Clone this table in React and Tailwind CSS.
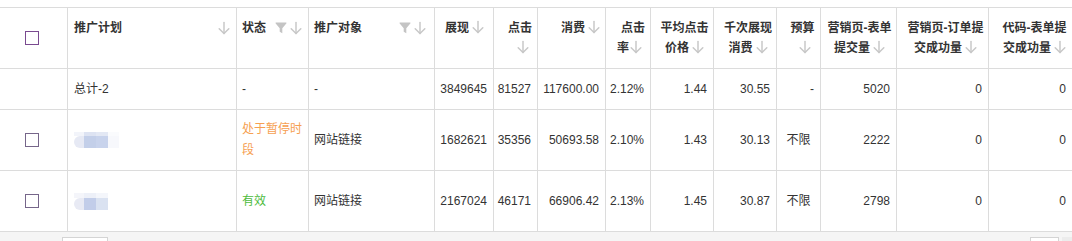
import React from "react";

const COLS =
  "grid grid-cols-[68px_169px_72px_126px_59px_44px_68px_45px_63px_63px_44px_76px_92px_83px] shrink-0";

function Arrow({ className = "" }) {
  return (
    <svg
      width="12"
      height="14"
      viewBox="0 0 12 14"
      className={"inline-block align-[-2px] " + className}
      fill="none"
      stroke="#c8c8c8"
      strokeWidth="1.5"
      strokeLinecap="round"
      strokeLinejoin="round"
    >
      <path d="M6 1.5V12.5" />
      <path d="M1.2 7.8L6 12.5L10.8 7.8" />
    </svg>
  );
}

function Filter() {
  return (
    <svg width="12" height="12" viewBox="0 0 12 12" className="inline-block align-[-1px]">
      <path
        d="M0.5 1.2C0.5 0.6 1 0.5 1.5 0.5H10.5C11 0.5 11.5 0.6 11.5 1.2L7.3 6.2V11.2L4.7 9.8V6.2Z"
        fill="#c4c4c4"
      />
    </svg>
  );
}

function Checkbox({ tone = "row" }) {
  return (
    <div
      className={
        "w-[14px] h-[14px] bg-white border " +
        (tone === "head" ? "border-[#7a4a90]" : "border-[#76668a]")
      }
    />
  );
}

function Blur({ variant }) {
  if (variant === 1) {
    return (
      <div className="flex flex-col blur-[0.6px]">
        <div className="flex h-[4px]">
          <div className="w-[10px] bg-[#f2f4fa]" />
          <div className="w-[12px] bg-[#dde3f2]" />
          <div className="w-[12px] bg-[#e3e8f4]" />
          <div className="w-[11px] bg-[#fafbfd]" />
        </div>
        <div className="flex h-[12px]">
          <div className="w-[10px] bg-[#e6e9f4] rounded-l-[6px]" />
          <div className="w-[12px] bg-[#c3cfe9]" />
          <div className="w-[12px] bg-[#c8d3ec]" />
          <div className="w-[11px] bg-[#f7f8fc]" />
        </div>
      </div>
    );
  }
  return (
    <div className="flex flex-col blur-[0.6px]">
      <div className="flex h-[5px]">
        <div className="w-[10px] bg-[#f4f5fa]" />
        <div className="w-[12px] bg-[#edf0f8]" />
        <div className="w-[12px] bg-[#f4f6fb]" />
      </div>
      <div className="flex h-[12px]">
        <div className="w-[10px] bg-[#e8eaf4] rounded-l-[6px]" />
        <div className="w-[12px] bg-[#c2cde9]" />
        <div className="w-[12px] bg-[#dae2f1]" />
      </div>
    </div>
  );
}

const cell = "border-r border-[#dcdcdc] px-[6px]";
const hcell = cell + " pt-[10px] leading-[20px]";

function HeaderRow() {
  return (
    <div className={COLS + " h-[62px] border-t border-b border-[#dcdcdc] font-bold text-[12px] text-[#333]"}>
      <div className={cell + " flex items-center justify-center pr-[10px]"}>
        <Checkbox tone="head" />
      </div>
      <div className={hcell + " flex justify-between items-start"}>
        <span>推广计划</span>
        <Arrow className="mt-[3px]" />
      </div>
      <div className={hcell + " flex justify-between items-start pl-[5px]"}>
        <span>状态</span>
        <span className="flex items-center gap-[3px] mt-[3px]">
          <Filter />
          <Arrow />
        </span>
      </div>
      <div className={hcell + " flex justify-between items-start pl-[5px] pr-[8px]"}>
        <span>推广对象</span>
        <span className="flex items-center gap-[3px] mt-[3px]">
          <Filter />
          <Arrow />
        </span>
      </div>
      <div className={hcell + " text-right pr-[9px]"}>
        展现<Arrow className="ml-[3px]" />
      </div>
      <div className={hcell + " text-right pr-[5px]"}>
        点击
        <br />
        <Arrow className="mr-[3px]" />
      </div>
      <div className={hcell + " text-right pr-[5px]"}>
        消费<Arrow className="ml-[3px]" />
      </div>
      <div className={hcell + " text-right pr-[5px] pl-0"}>
        点击
        <br />
        率<Arrow className="ml-[1px] mr-[3px]" />
      </div>
      <div className={hcell + " text-center pl-[9px] pr-[4px]"}>
        平均点击
        <br />
        价格<Arrow className="ml-[3px]" />
      </div>
      <div className={hcell + " text-center pl-[9px] pr-[3px]"}>
        千次展现
        <br />
        消费<Arrow className="ml-[3px]" />
      </div>
      <div className={hcell + " text-center pl-[12px] pr-[4px]"}>
        预算
        <br />
        <Arrow className="ml-[4px]" />
      </div>
      <div className={hcell + " text-center pl-[6px] pr-[4px]"}>
        营销页-表单
        <br />
        提交量<Arrow className="ml-[3px]" />
      </div>
      <div className={hcell + " text-center pl-[9px] pr-[3px]"}>
        营销页-订单提
        <br />
        交成功量<Arrow className="ml-[3px]" />
      </div>
      <div className={"px-[6px] pt-[10px] leading-[20px] text-center pl-[12px] pr-[4px]"}>
        代码-表单提
        <br />
        交成功量<Arrow className="ml-[3px]" />
      </div>
    </div>
  );
}

function Row({ h, check, name, status, target, nums, budget, budgetCenter }) {
  const c = cell + " flex items-center";
  const r = c + " justify-end";
  return (
    <div className={COLS + " " + h + " border-b border-[#dcdcdc] text-[12px] text-[#333]"}>
      <div className={cell + " flex items-center justify-center pr-[10px]"}>
        {check && <Checkbox />}
      </div>
      <div className={c + " pl-[6px]"}>{name}</div>
      <div className={c + " leading-[21px] pl-[5px] pr-[4px]"}>{status}</div>
      <div className={c + " pl-[5px]"}>{target}</div>
      <div className={r}>{nums[0]}</div>
      <div className={r}>{nums[1]}</div>
      <div className={r}>{nums[2]}</div>
      <div className={r}>{nums[3]}</div>
      <div className={r}>{nums[4]}</div>
      <div className={r}>{nums[5]}</div>
      <div className={c + (budgetCenter ? " justify-center" : " justify-end")}>{budget}</div>
      <div className={r}>{nums[6]}</div>
      <div className={r}>{nums[7]}</div>
      <div className="flex items-center justify-end px-[6px]">{nums[8]}</div>
    </div>
  );
}

export default function App() {
  return (
    <div
      className="w-[1072px] h-[241px] overflow-hidden bg-white pt-[7px] flex flex-col"
      style={{ fontFamily: '"Liberation Sans", "Noto Sans CJK SC", sans-serif' }}
    >
      <HeaderRow />
      <Row
        h="h-[41px]"
        name="总计-2"
        status="-"
        target="-"
        nums={["3849645", "81527", "117600.00", "2.12%", "1.44", "30.55", "5020", "0", "0"]}
        budget="-"
      />
      <Row
        h="h-[61px]"
        check
        name={<Blur variant={1} />}
        status={
          <span className="text-[#f6a052]">
            处于暂停时
            <br />段
          </span>
        }
        target="网站链接"
        nums={["1682621", "35356", "50693.58", "2.10%", "1.43", "30.13", "2222", "0", "0"]}
        budget="不限"
        budgetCenter
      />
      <Row
        h="h-[61px]"
        check
        name={<Blur variant={2} />}
        status={<span className="text-[#4dbb3c]">有效</span>}
        target="网站链接"
        nums={["2167024", "46171", "66906.42", "2.13%", "1.45", "30.87", "2798", "0", "0"]}
        budget="不限"
        budgetCenter
      />
      <div className="flex-1 min-h-0 overflow-hidden bg-[#f5f5f5] flex items-start pt-[5px]">
        <div className="ml-[62px] w-[46px] h-[10px] shrink-0 bg-white border-t border-x border-[#d4d4d4]" />
        <div className="flex-1" />
        <div className="w-[29px] h-[10px] shrink-0 bg-white border-t border-x border-[#d4d4d4]" />
        <div className="ml-[3px] w-[10px] h-[10px] shrink-0 bg-[#ececec]" />
      </div>
    </div>
  );
}
